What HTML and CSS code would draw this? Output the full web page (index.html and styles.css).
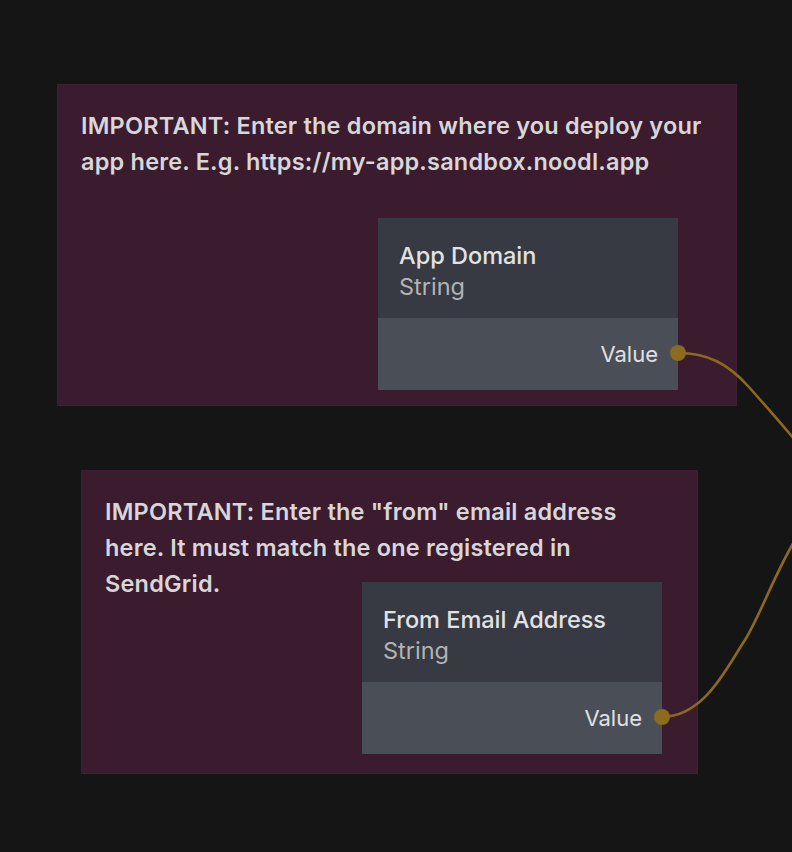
FILE: index.html
```html
<!DOCTYPE html>
<html>
<head>
<meta charset="utf-8">
<link rel="stylesheet" href="styles.css">
</head>
<body>
<div class="canvas">
  <div class="comment comment-a">
    <p class="comment-text">IMPORTANT: Enter the domain where you deploy your app here. E.g. https://my-app.sandbox.noodl.app</p>
  </div>
  <div class="comment comment-b">
    <p class="comment-text">IMPORTANT: Enter the "from" email address here. It must match the one registered in SendGrid.</p>
  </div>

  <div class="node node-a">
    <div class="node-head">
      <div class="node-title">App Domain</div>
      <div class="node-type">String</div>
    </div>
    <div class="node-body">
      <span class="port-label">Value</span>
    </div>
  </div>

  <div class="node node-b">
    <div class="node-head">
      <div class="node-title">From Email Address</div>
      <div class="node-type">String</div>
    </div>
    <div class="node-body">
      <span class="port-label">Value</span>
    </div>
  </div>

  <svg class="wires" width="792" height="852" viewBox="0 0 792 852">
    <path d="M678 353 C 708 353, 728 364, 748 386 C 764 404, 780 422, 800 446" />
    <path d="M662 717 C 705 717, 728 665, 745 640 C 762 612, 778 565, 800 532" />
    <circle cx="678" cy="353" r="8" />
    <circle cx="662" cy="717" r="8" />
  </svg>
</div>
</body>
</html>
```

FILE: styles.css
```css
html, body {
  margin: 0;
  padding: 0;
  background: #151515;
}
.canvas {
  position: relative;
  width: 792px;
  height: 852px;
  overflow: hidden;
  background: #151515;
  font-family: Inter, "Noto Sans", sans-serif;
}
.comment {
  position: absolute;
  box-sizing: border-box;
  background: #3b1c2f;
  border: 1px solid #401f34;
  padding: 23px 23px;
}
.comment-a {
  left: 57px;
  top: 84px;
  width: 680px;
  height: 322px;
}
.comment-b {
  left: 81px;
  top: 470px;
  width: 617px;
  height: 304px;
}
.comment-text {
  margin: 0;
  color: #d8d6d8;
  font-size: 23.5px;
  font-weight: 600;
  letter-spacing: 0.2px;
  line-height: 36px;
}
.comment-a .comment-text {
  width: 650px;
}
.comment-b .comment-text {
  width: 560px;
}
.node {
  position: absolute;
  width: 300px;
  display: flex;
  flex-direction: column;
}
.node-a { left: 378px; top: 218px; }
.node-b { left: 362px; top: 582px; }
.node-head {
  background: #373a42;
  height: 100px;
  box-sizing: border-box;
  padding: 22px 21px;
}
.node-title {
  color: #e2e2e4;
  font-size: 23.5px;
  font-weight: 500;
  line-height: 31px;
}
.node-type {
  color: #b3b3b6;
  font-size: 23.5px;
  font-weight: 400;
  line-height: 31px;
}
.node-body {
  background: #4a4e57;
  height: 72px;
  display: flex;
  align-items: center;
  justify-content: flex-end;
  padding-right: 20px;
}
.port-label {
  color: #e0e0e2;
  font-size: 22px;
  font-weight: 400;
}
.wires {
  position: absolute;
  left: 0;
  top: 0;
  pointer-events: none;
}
.wires path {
  fill: none;
  stroke: #8b6a1e;
  stroke-width: 2.6;
}
.wires circle {
  fill: #8a6b20;
}
```
